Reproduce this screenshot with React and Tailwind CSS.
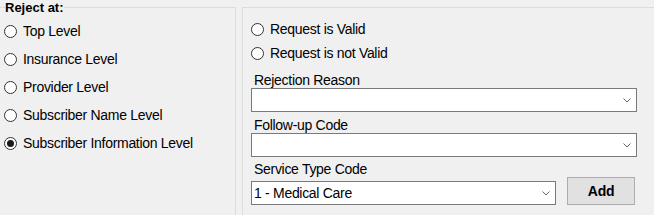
import React from "react";

const font = { fontFamily: '"Liberation Sans", Arial, sans-serif' };

function Radio({ checked, label }) {
  return (
    <div className="flex items-center h-full">
      <span className="w-[13px] h-[13px] rounded-full border border-[#333333] bg-white flex items-center justify-center shrink-0">
        {checked && <span className="w-[7px] h-[7px] rounded-full bg-[#1a1a1a]" />}
      </span>
      <span className="ml-[6px] text-[14px] tracking-[-0.3px] leading-none text-black whitespace-nowrap">{label}</span>
    </div>
  );
}

function Chevron() {
  return (
    <svg width="8" height="5" viewBox="0 0 8 5" className="shrink-0">
      <polyline points="0.5,0.5 4,4 7.5,0.5" fill="none" stroke="#666" strokeWidth="1" />
    </svg>
  );
}

function Combo({ width, value }) {
  return (
    <div
      className="h-[24px] border border-[#7a7a7a] bg-white flex items-center pl-[2px] pr-[5px]"
      style={{ width }}
    >
      <span className="flex-1 text-[14px] tracking-[-0.3px] leading-none text-black whitespace-nowrap">{value}</span>
      <Chevron />
    </div>
  );
}

export default function App() {
  const levels = [
    "Top Level",
    "Insurance Level",
    "Provider Level",
    "Subscriber Name Level",
    "Subscriber Information Level",
  ];
  return (
    <div className="w-[654px] h-[215px] bg-[#f0f0f0] flex overflow-hidden" style={font}>
      <fieldset className="w-[236px] h-[240px] m-0 p-0 border-0 border-t border-r border-[#dcdcdc] shrink-0">
        <legend className="ml-[5px] px-0 text-[13px] leading-[15px] font-bold text-black">Reject at:</legend>
        <div className="flex flex-col pl-[4px] mt-[2px]">
          {levels.map((l, i) => (
            <div key={l} className="h-[28px]">
              <Radio label={l} checked={i === 4} />
            </div>
          ))}
        </div>
      </fieldset>
      <div className="ml-[6px] mt-[7px] flex-1 h-[240px] border-t border-l border-[#dcdcdc] pl-[8px] pt-[9px]">
        <div className="h-[24px]">
          <Radio label="Request is Valid" />
        </div>
        <div className="h-[24px]">
          <Radio label="Request is not Valid" />
        </div>
        <div className="h-[23px] flex items-end pl-[3px] pb-[1px] text-[14px] tracking-[-0.3px] leading-none">Rejection Reason</div>
        <Combo width={386} value="" />
        <div className="h-[21px] flex items-end pl-[3px] pb-[1px] text-[14px] tracking-[-0.3px] leading-none">Follow-up Code</div>
        <Combo width={386} value="" />
        <div className="h-[20px] flex items-end pl-[3px] pb-[1px] text-[14px] tracking-[-0.3px] leading-none">Service Type Code</div>
        <div className="flex items-end">
          <Combo width={305} value="1 - Medical Care" />
          <button className="ml-[11px] w-[68px] h-[28px] bg-[#e1e1e1] border border-[#adadad] text-[14px] tracking-[-0.3px] font-bold text-black leading-none">
            Add
          </button>
        </div>
      </div>
    </div>
  );
}
